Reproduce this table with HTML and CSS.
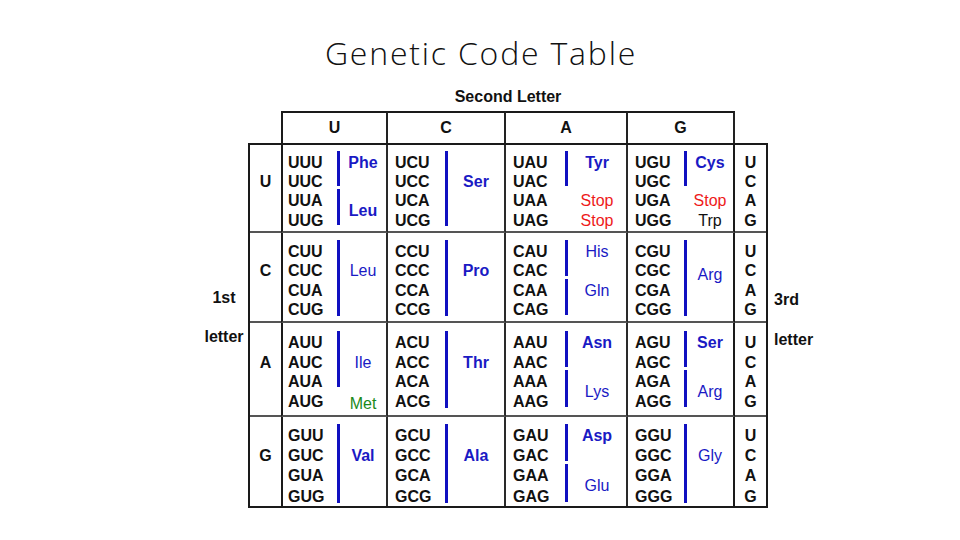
FILE: index.html
```html
<!DOCTYPE html>
<html>
<head>
<meta charset="utf-8">
<title>Genetic Code Table</title>
<link rel="stylesheet" href="styles.css">
</head>
<body>
<div class="slide">
  <h1 class="title">Genetic Code Table</h1>
  <div class="chart">
    <div class="second">Second Letter</div>
    <div class="head">
      <div class="hd hd-first">U</div>
      <div class="hd">C</div>
      <div class="hd">A</div>
      <div class="hd">G</div>
    </div>
    <div class="body">
      <div class="side side-left"><span>1st</span><span>letter</span></div>
      <div class="box">
        <!-- Row U -->
        <div class="fl row-u">U</div>
        <div class="cell row-u col-u">
          <div class="codons">UUU<br>UUC<br>UUA<br>UUG</div>
          <div class="bar b12"></div><div class="aa r1">Phe</div>
          <div class="bar b34"></div><div class="aa r35">Leu</div>
        </div>
        <div class="cell row-u col-c">
          <div class="codons">UCU<br>UCC<br>UCA<br>UCG</div>
          <div class="bar b1234"></div><div class="aa r2">Ser</div>
        </div>
        <div class="cell row-u col-a">
          <div class="codons">UAU<br>UAC<br>UAA<br>UAG</div>
          <div class="bar b12"></div><div class="aa r1">Tyr</div>
          <div class="aa r3 stop">Stop</div>
          <div class="aa r4 stop">Stop</div>
        </div>
        <div class="cell row-u col-g">
          <div class="codons">UGU<br>UGC<br>UGA<br>UGG</div>
          <div class="bar b12"></div><div class="aa r1">Cys</div>
          <div class="aa r3 stop">Stop</div>
          <div class="aa r4 trp">Trp</div>
        </div>
        <div class="tl row-u">U<br>C<br>A<br>G</div>

        <!-- Row C -->
        <div class="fl row-c">C</div>
        <div class="cell row-c col-u">
          <div class="codons">CUU<br>CUC<br>CUA<br>CUG</div>
          <div class="bar b1234"></div><div class="aa r2 n">Leu</div>
        </div>
        <div class="cell row-c col-c">
          <div class="codons">CCU<br>CCC<br>CCA<br>CCG</div>
          <div class="bar b1234"></div><div class="aa r2">Pro</div>
        </div>
        <div class="cell row-c col-a">
          <div class="codons">CAU<br>CAC<br>CAA<br>CAG</div>
          <div class="bar b12"></div><div class="aa r1 n">His</div>
          <div class="bar b34"></div><div class="aa r3 n">Gln</div>
        </div>
        <div class="cell row-c col-g">
          <div class="codons">CGU<br>CGC<br>CGA<br>CGG</div>
          <div class="bar b1234"></div><div class="aa r2 n low">Arg</div>
        </div>
        <div class="tl row-c">U<br>C<br>A<br>G</div>

        <!-- Row A -->
        <div class="fl row-a">A</div>
        <div class="cell row-a col-u">
          <div class="codons">AUU<br>AUC<br>AUA<br>AUG</div>
          <div class="bar b123"></div><div class="aa r2 n">Ile</div>
          <div class="aa r4 n met">Met</div>
        </div>
        <div class="cell row-a col-c">
          <div class="codons">ACU<br>ACC<br>ACA<br>ACG</div>
          <div class="bar b1234"></div><div class="aa r2">Thr</div>
        </div>
        <div class="cell row-a col-a">
          <div class="codons">AAU<br>AAC<br>AAA<br>AAG</div>
          <div class="bar b12"></div><div class="aa r1">Asn</div>
          <div class="bar b34"></div><div class="aa r35 n">Lys</div>
        </div>
        <div class="cell row-a col-g">
          <div class="codons">AGU<br>AGC<br>AGA<br>AGG</div>
          <div class="bar b12"></div><div class="aa r1">Ser</div>
          <div class="bar b34"></div><div class="aa r35 n">Arg</div>
        </div>
        <div class="tl row-a">U<br>C<br>A<br>G</div>

        <!-- Row G -->
        <div class="fl row-g">G</div>
        <div class="cell row-g col-u">
          <div class="codons">GUU<br>GUC<br>GUA<br>GUG</div>
          <div class="bar b1234"></div><div class="aa r2">Val</div>
        </div>
        <div class="cell row-g col-c">
          <div class="codons">GCU<br>GCC<br>GCA<br>GCG</div>
          <div class="bar b1234"></div><div class="aa r2">Ala</div>
        </div>
        <div class="cell row-g col-a">
          <div class="codons">GAU<br>GAC<br>GAA<br>GAG</div>
          <div class="bar b12"></div><div class="aa r1">Asp</div>
          <div class="bar b34"></div><div class="aa r35 n">Glu</div>
        </div>
        <div class="cell row-g col-g">
          <div class="codons">GGU<br>GGC<br>GGA<br>GGG</div>
          <div class="bar b1234"></div><div class="aa r2 n">Gly</div>
        </div>
        <div class="tl row-g">U<br>C<br>A<br>G</div>
      </div>
      <div class="side side-right"><span>3rd</span><span>letter</span></div>
    </div>
  </div>
</div>
</body>
</html>
```

FILE: styles.css
```css
* { box-sizing: border-box; }

html, body {
  margin: 0;
  padding: 0;
  background: #ffffff;
}

.slide {
  width: 960px;
  height: 540px;
  padding-top: 33px;
  overflow: hidden;
  font-family: "Liberation Sans", Arial, sans-serif;
  color: #111;
}

.title {
  margin: 0 0 14px 0;
  height: 40px;
  line-height: 40px;
  text-align: center;
  font-family: "Open Sans", "Lato", sans-serif;
  font-weight: 300;
  font-size: 32px;
  letter-spacing: 1.8px;
  padding-left: 2px;
  color: #111;
}

.chart {
  margin-left: 200px;
  width: 616px;
}

.second {
  margin-left: 81px;
  width: 454px;
  height: 24px;
  line-height: 20px;
  text-align: center;
  font-weight: bold;
  font-size: 16px;
}

.head {
  margin-left: 81px;
  width: 454px;
  height: 32px;
  display: grid;
  grid-template-columns: 107px 118px 122px 107px;
}

.hd {
  border-top: 2px solid #1a1a1a;
  border-right: 2px solid #222;
  font-weight: bold;
  font-size: 16px;
  display: flex;
  align-items: center;
  justify-content: center;
  padding-bottom: 1px;
}

.hd-first { border-left: 2px solid #1a1a1a; }

.body {
  display: flex;
}

.side {
  width: 48px;
  display: flex;
  flex-direction: column;
  justify-content: center;
  font-weight: bold;
  font-size: 16px;
  line-height: 20px;
}

.side-left {
  align-items: center;
  gap: 19px;
  padding-bottom: 16px;
}

.side-right {
  align-items: flex-start;
  padding-left: 6px;
  gap: 20px;
  padding-bottom: 12px;
}

.box {
  width: 520px;
  height: 365px;
  border: 2px solid #1a1a1a;
  display: grid;
  grid-template-columns: 31px 107px 118px 122px 107px 31px;
  grid-template-rows: 88px 90px 94px 89px;
}

.row-u { --lh: 19.2px; --pt: 8px; }
.row-c { --lh: 19.4px; --pt: 9px; }
.row-a { --lh: 19.7px; --pt: 10px; }
.row-g { --lh: 20.2px; --pt: 9px; }

.row-u, .row-c, .row-a { border-bottom: 2px solid #555; }

.fl, .tl {
  padding-top: var(--pt);
  line-height: var(--lh);
  text-align: center;
  font-weight: bold;
  font-size: 16px;
}

.fl {
  padding-top: calc(var(--pt) + var(--lh));
}

.cell {
  border-right: 2px solid #2a2a2a;
  padding-top: var(--pt);
  padding-left: 7px;
  display: grid;
  grid-template-columns: var(--cw) 3px 1fr;
  grid-template-rows: repeat(8, calc(var(--lh) / 2));
  align-content: start;
}

.col-u { border-left: 2px solid #1a1a1a; padding-left: 5px; --cw: 49px; }
.col-c { --cw: 50px; }
.col-a { --cw: 52px; }
.col-g { --cw: 49px; border-right-color: #1a1a1a; }

.codons {
  grid-column: 1;
  grid-row: 1 / 9;
  line-height: var(--lh);
  font-weight: bold;
  font-size: 16px;
  color: #111;
}

.bar {
  grid-column: 2;
  background: #1010c0;
  margin-top: -2px;
  margin-bottom: 5px;
}

.b12 { grid-row: 1 / 5; }
.b34 { grid-row: 5 / 9; }
.b123 { grid-row: 1 / 7; }
.b1234 { grid-row: 1 / 9; margin-bottom: 4px; }

.aa {
  grid-column: 3;
  text-align: center;
  line-height: var(--lh);
  font-size: 16px;
  font-weight: bold;
  color: #1a1ac4;
  white-space: nowrap;
}

.aa.n { font-weight: normal; }

.r1 { grid-row: 1 / 3; }
.r2 { grid-row: 3 / 5; }
.r3 { grid-row: 5 / 7; }
.r4 { grid-row: 7 / 9; }
.r35 { grid-row: 6 / 8; }

.low { padding-top: 4px; }

.stop { color: #ee1a1a; font-weight: normal; }
.trp { color: #111; font-weight: normal; }
.met { color: #1a8a1a; padding-top: 2px; }
```
